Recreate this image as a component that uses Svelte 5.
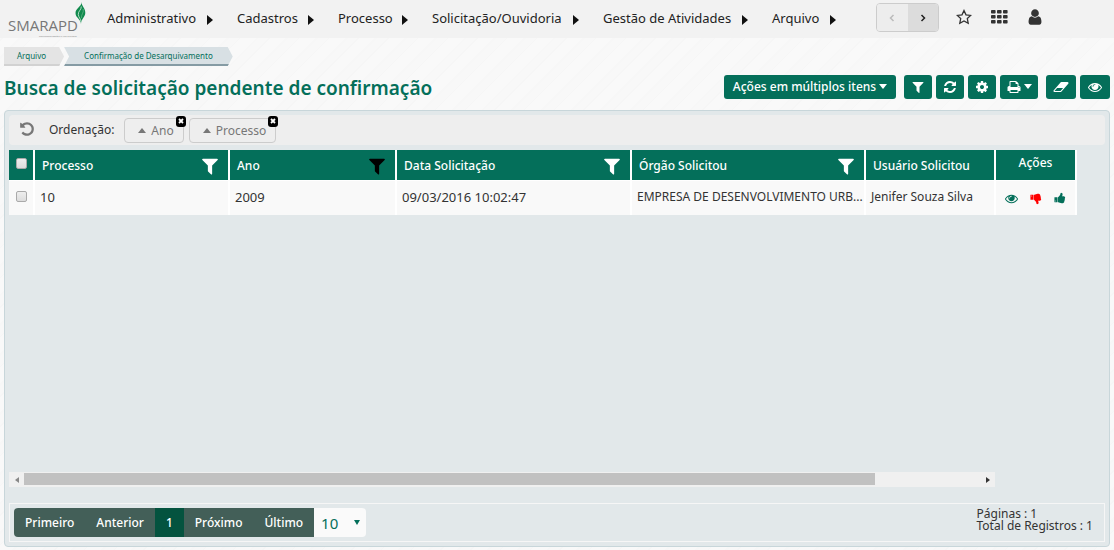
<script>
  const menu = ['Administrativo', 'Cadastros', 'Processo', 'Solicitação/Ouvidoria', 'Gestão de Atividades', 'Arquivo'];

  const icons = {
    filter: 'M1595 295q17 41-14 70l-493 493v742q0 42-39 59-13 5-25 5-27 0-45-19l-256-256q-19-19-19-45v-486l-493-493q-31-29-14-70 17-39 59-39h1280q42 0 59 39z',
    refresh: 'M1639 1056q0 5-1 7-64 268-268 434.5t-478 166.5q-146 0-282.5-55t-243.5-157l-129 129q-19 19-45 19t-45-19-19-45v-448q0-26 19-45t45-19h448q26 0 45 19t19 45-19 45l-137 137q71 66 161 102t187 36q134 0 250-65t186-179q11-17 53-117 8-23 30-23h192q13 0 22.5 9.5t9.5 22.5zm25-800v448q0 26-19 45t-45 19h-448q-26 0-45-19t-19-45 19-45l138-138q-148-137-349-137-134 0-250 65t-186 179q-11 17-53 117-8 23-30 23h-199q-13 0-22.5-9.5t-9.5-22.5v-7q65-268 270-434.5t480-166.5q146 0 284 55.5t245 156.5l130-129q19-19 45-19t45 19 19 45z',
    cog: 'M1152 896q0-106-75-181t-181-75-181 75-75 181 75 181 181 75 181-75 75-181zm512-109v222q0 12-8 23t-20 13l-185 28q-19 54-39 91 35 50 107 138 10 12 10 25t-9 23q-27 37-99 108t-94 71q-12 0-26-9l-138-108q-44 23-91 38-16 136-29 186-7 28-36 28h-222q-14 0-24.5-8.5t-11.5-21.5l-28-184q-49-16-90-37l-141 107q-10 9-25 9-14 0-25-11-126-114-165-168-7-10-7-23 0-12 8-23 15-21 51-66.5t54-70.5q-27-50-41-99l-183-27q-13-2-21-12.5t-8-23.5v-222q0-12 8-23t19-13l186-28q14-46 39-92-40-57-107-138-10-12-10-24 0-10 9-23 26-36 98.5-107.5t94.5-71.5q13 0 26 10l138 107q44-23 91-38 16-136 29-186 7-28 36-28h222q14 0 24.5 8.5t11.5 21.5l28 184q49 16 90 37l142-107q9-9 24-9 13 0 25 10 129 119 165 170 7 8 7 22 0 12-8 23-15 21-51 66.5t-54 70.5q26 50 41 98l183 28q13 2 21 12.5t8 23.5z',
    print: 'M448 1536h896v-256h-896v256zm0-640h896v-384h-160q-40 0-68-28t-28-68v-160h-640v640zm1152 64q0-26-19-45t-45-19-45 19-19 45 19 45 45 19 45-19 19-45zm128 0v416q0 13-9.5 22.5t-22.5 9.5h-224v160q0 40-28 68t-68 28h-960q-40 0-68-28t-28-68v-160h-224q-13 0-22.5-9.5t-9.5-22.5v-416q0-79 56.5-135.5t135.5-56.5h64v-544q0-40 28-68t68-28h672q40 0 88 20t76 48l152 152q28 28 48 76t20 88v256h64q79 0 135.5 56.5t56.5 135.5z',
    eraser: 'M960 1408l336-384h-768l-336 384h768zm1013-1077q15 34 9.5 71.5t-30.5 65.5l-896 1024q-38 44-96 44h-768q-38 0-69.5-20.5t-47.5-54.5q-15-34-9.5-71.5t30.5-65.5l896-1024q38-44 96-44h768q38 0 69.5 20.5t47.5 54.5z',
    eye: 'M1664 960q-152-236-381-353 61 104 61 225 0 185-131.5 316.5t-316.5 131.5-316.5-131.5-131.5-316.5q0-121 61-225-229 117-381 353 133 205 333.5 326.5t434.5 121.5 434.5-121.5 333.5-326.5zm-720-384q0-20-14-34t-34-14q-125 0-214.5 89.5t-89.5 214.5q0 20 14 34t34 14 34-14 14-34q0-86 61-147t147-61q20 0 34-14t14-34zm848 384q0 34-20 69-140 230-376.5 368.5t-499.5 138.5-499.5-139-376.5-368q-20-35-20-69t20-69q140-229 376.5-368t499.5-139 499.5 139 376.5 368q20 35 20 69z',
    user: 'M1536 1399q0 109-62.5 187t-150.5 78h-854q-88 0-150.5-78t-62.5-187q0-85 8.5-160.5t31.5-152 58.5-131 94-89 134.5-34.5q131 128 313 128t313-128q76 0 134.5 34.5t94 89 58.5 131 31.5 152 8.5 160.5zm-256-887q0 159-112.5 271.5t-271.5 112.5-271.5-112.5-112.5-271.5 112.5-271.5 271.5-112.5 271.5 112.5 112.5 271.5z',
    undo: 'M1664 896q0 156-61 298t-164 245-245 164-298 61q-172 0-327-72.5t-264-204.5q-7-10-6.5-22.5t8.5-20.5l137-138q10-9 25-9 16 2 23 12 73 95 179 147t225 52q104 0 198.5-40.5t163.5-109.5 109.5-163.5 40.5-198.5-40.5-198.5-109.5-163.5-163.5-109.5-198.5-40.5q-98 0-188 35.5t-160 101.5l137 138q31 30 14 69-17 40-59 40h-448q-26 0-45-19t-19-45v-448q0-42 40-59 39-17 69 14l130 129q107-101 244.5-156.5t284.5-55.5q156 0 298 61t245 164 164 245 61 298z',
    thumb: 'M320 1344q0-26-19-45t-45-19q-27 0-45.5 19t-18.5 45q0 27 18.5 45.5t45.5 18.5q26 0 45-18.5t19-45.5zm160-512v640q0 26-19 45t-45 19h-288q-26 0-45-19t-19-45v-640q0-26 19-45t45-19h288q26 0 45 19t19 45zm1184 0q0 86-55 149 15 44 15 76 3 76-43 137 17 56 0 117-15 57-54 94 9 112-49 181-64 76-197 78h-129q-66 0-144-15.5t-121.5-29-120.5-39.5q-123-43-158-44-26-1-45-19.5t-19-44.5v-641q0-25 18-43.5t43-20.5q24-2 76-59t101-121q68-87 101-120 18-18 31-48t17.5-48.5 13.5-60.5q7-39 12.5-61t19.5-52 34-50q19-19 45-19 46 0 82.5 10.5t60 26 40 40.5 24 45 12 50 5 45 .5 39q0 38-9.5 76t-19 60-27.5 56q-3 6-10 18t-11 22-8 24h277q78 0 135 57t57 135z'
  };

  const columns = [
    { title: 'Processo', filter: true, numeric: true },
    { title: 'Ano', filter: true, active: true, numeric: true },
    { title: 'Data Solicitação', filter: true, numeric: true },
    { title: 'Órgão Solicitou', filter: true },
    { title: 'Usuário Solicitou', filter: false }
  ];

  const rows = [
    ['10', '2009', '09/03/2016 10:02:47', 'EMPRESA DE DESENVOLVIMENTO URB...', 'Jenifer Souza Silva']
  ];

  let pageSize = $state('10');
</script>

{#snippet icon(name, size = 14)}
  <svg class="icon" width={name === 'eraser' ? size + 2 : size} height={size} viewBox={name === 'eraser' ? '0 0 2048 1792' : '0 0 1792 1792'} aria-hidden="true">
    <path d={icons[name]} />
  </svg>
{/snippet}

<div class="page">
  <header>
    <a class="logo" href="#inicio">
      <span class="brand">SMARAPD</span>
      <svg class="leaf" width="11" height="23" viewBox="0 0 11 23" aria-hidden="true">
        <path d="M6.500 0c0 4 4 6 3.800 11-.2 4-4.300 6-4.300 11C6 17 .5 16 .5 11 .5 6 6.500 5 6.500 0z" fill="#118a4d" />
        <path d="M6.300 4.500C6.500 8 3 9 3.300 12.500c.3 3 2.400 4 2.700 7" fill="none" stroke="#d7eee0" stroke-width=".8" />
        <path d="M8.200 7c.8 4-2 5-1.800 9" fill="none" stroke="#8fcba9" stroke-width=".5" />
      </svg>
      <span class="tagline">Simplificando Gestão e a Vida na Cidade</span>
    </a>
    <nav>
      {#each menu as item}
        <a href="#menu">{item}<span class="arrow"></span></a>
      {/each}
    </nav>
    <div class="steps">
      <button disabled aria-label="Voltar"><svg width="6" height="8" viewBox="0 0 6 8"><path d="M4.500 1 1.500 4l3 3" /></svg></button>
      <button aria-label="Avançar"><svg width="6" height="8" viewBox="0 0 6 8"><path d="m1.500 1 3 3-3 3" /></svg></button>
    </div>
    <div class="tools">
      <button class="plain" aria-label="Favoritos">
        <svg width="16" height="16" viewBox="0 0 16 16"><path d="m8 1.500 2 4.300 4.700.6-3.400 3.200.9 4.700L8 12l-4.200 2.300.9-4.700L1.300 6.400 6 5.800z" fill="none" stroke="#333" stroke-width="1.300" /></svg>
      </button>
      <button class="plain" aria-label="Aplicativos">
        <svg width="18" height="14" viewBox="0 0 18 14" fill="#333">
          {#each [0, 5, 10] as y}{#each [1, 7, 13] as x}<rect {x} {y} width="4.600" height="3.600" rx=".8" />{/each}{/each}
        </svg>
      </button>
      <button class="plain" aria-label="Usuário">{@render icon('user', 18)}</button>
    </div>
  </header>

  <ol class="crumbs">
    <li><a href="#arquivo">Arquivo</a></li>
    <li class="current"><a href="#confirmacao">Confirmação de Desarquivamento</a></li>
  </ol>

  <div class="heading">
    <h1>Busca de solicitação pendente de confirmação</h1>
    <div class="actions">
      <button class="green multi">Ações em múltiplos itens<span class="caret"></span></button>
      <button class="green" aria-label="Filtrar">{@render icon('filter')}</button>
      <button class="green" aria-label="Atualizar">{@render icon('refresh')}</button>
      <button class="green" aria-label="Configurar">{@render icon('cog')}</button>
      <button class="green print" aria-label="Imprimir">{@render icon('print')}<span class="caret"></span></button>
      <button class="green apart" aria-label="Limpar">{@render icon('eraser')}</button>
      <button class="green wide" aria-label="Visualizar">{@render icon('eye')}</button>
    </div>
  </div>

  <main>
    <div class="sorting">
      <button class="plain undo" aria-label="Desfazer">{@render icon('undo', 16)}</button>
      <span>Ordenação:</span>
      {#each ['Ano', 'Processo'] as name}
        <div class="chip">
          <button class="sort"><span class="up"></span>{name}</button>
          <button class="remove" aria-label="Remover {name}"><svg width="6" height="6" viewBox="0 0 6 6"><path d="m1 1 4 4M5 1 1 5" stroke="#fff" stroke-width="1.800" /></svg></button>
        </div>
      {/each}
    </div>

    <div class="grid">
      <table>
        <colgroup>
          <col class="c-check" /><col class="c-proc" /><col class="c-ano" /><col class="c-data" /><col /><col class="c-user" /><col class="c-acts" />
        </colgroup>
        <thead>
          <tr>
            <th class="check"><input type="checkbox" aria-label="Selecionar todos" /></th>
            {#each columns as col}
              <th>
                <div class="head">
                  {col.title}
                  {#if col.filter}
                    <button class="plain funnel" class:active={col.active} aria-label="Filtrar {col.title}">{@render icon('filter', 20)}</button>
                  {/if}
                </div>
              </th>
            {/each}
            <th class="acts">Ações</th>
          </tr>
        </thead>
        <tbody>
          {#each rows as row}
            <tr>
              <td class="check"><input type="checkbox" aria-label="Selecionar processo {row[0]}" /></td>
              {#each row as cell, i}<td class:numeric={columns[i].numeric}>{cell}</td>{/each}
              <td class="acts">
                <div class="row-acts">
                  <button class="plain" aria-label="Visualizar">{@render icon('eye', 13)}</button>
                  <button class="plain reject" aria-label="Rejeitar">{@render icon('thumb', 12)}</button>
                  <button class="plain" aria-label="Confirmar">{@render icon('thumb', 12)}</button>
                </div>
              </td>
            </tr>
          {/each}
        </tbody>
      </table>
    </div>

    <div class="scroll">
      <button class="plain" aria-label="Rolar à esquerda"><span class="tri left"></span></button>
      <div class="track"><div class="thumb"></div></div>
      <button class="plain" aria-label="Rolar à direita"><span class="tri right"></span></button>
    </div>

    <footer>
      <div class="pager">
        <button>Primeiro</button>
        <button>Anterior</button>
        <button class="on">1</button>
        <button>Próximo</button>
        <button>Último</button>
        <div class="size">
          <select bind:value={pageSize} aria-label="Registros por página">
            <option>10</option><option>20</option><option>50</option>
          </select>
        </div>
      </div>
      <div class="totals">
        <div>Páginas : 1</div>
        <div>Total de Registros : 1</div>
      </div>
    </footer>
  </main>
</div>

<style>
  :global(body) { margin: 0; }
  * { box-sizing: border-box; }
  .page {
    min-height: 100vh;
    display: flex;
    flex-direction: column;
    font-family: 'Noto Sans', 'Open Sans', sans-serif;
    font-size: 12px;
    color: #333;
    background: repeating-linear-gradient(135deg, #f8f8f8 0 7px, #f6f6f6 7px 8px, #f9f9f9 8px 19px, #f7f7f7 19px 21px);
  }
  button, select { font: inherit; color: inherit; cursor: pointer; }
  a { color: inherit; text-decoration: none; }
  .icon { display: block; fill: currentColor; }
  .plain { display: flex; padding: 0; border: 0; background: none; }

  header { display: flex; height: 38px; background: #f2f2f2; }
  .logo { position: relative; width: 107px; flex: none; padding: 17px 0 0 8px; }
  .brand { display: block; font: 15px/16px 'Open Sans', sans-serif; color: #777; }
  .leaf { position: absolute; left: 75px; top: 2px; }
  .tagline { position: absolute; left: 39px; top: 35px; font-size: 2px; line-height: 3px; white-space: nowrap; color: #888; }
  nav { display: grid; grid-template-columns: 130px 101px 94px 171px 169px 64px; flex: none; margin-right: 40px; line-height: 36px; height: 36px; font-size: 13px; color: #222; }
  nav a { display: flex; align-items: center; justify-content: space-between; padding-right: 24px; white-space: nowrap; }
  nav a:last-child { padding-right: 0; }
  .arrow { border: 5px solid transparent; border-left: 6px solid #111; border-right: 0; margin-top: 3px; }
  .steps { display: flex; width: 63px; height: 29px; margin-top: 3px; border: 1px solid #ccc; border-radius: 4px; overflow: hidden; }
  .steps button { flex: 1; padding: 0; border: 0; background: #dcdcdc; }
  .steps button:disabled { background: #ededed; opacity: 1; }
  .steps path { fill: none; stroke: #222; stroke-width: 1.500; }
  .steps button:disabled path { stroke: #bbb; }
  .tools { display: flex; align-items: center; gap: 18px; height: 34px; margin-left: 17px; color: #333; }

  .crumbs { display: flex; list-style: none; margin: 9px 0 0 4px; padding: 0; font-size: 8px; line-height: 17px; color: #046f5a; }
  .crumbs li { height: 19px; padding: 0 18px 0 13px; background: #e4e4e4; border-bottom: 2px solid #d2d2d2; clip-path: polygon(0 0, calc(100% - 5px) 0, 100% 50%, calc(100% - 5px) 100%, 0 100%); }
  .crumbs .current { padding: 0 20px; background: #d8e0e4; border-color: #859ba4; clip-path: polygon(0 0, calc(100% - 5px) 0, 100% 50%, calc(100% - 5px) 100%, 0 100%, 5px 50%); }

  .heading { display: flex; justify-content: space-between; align-items: center; height: 33px; margin: 4px 4px 7px; }
  h1 { margin: 0; padding-top: 2px; font-size: 19px; line-height: 24px; font-weight: 600; color: #046f5a; }
  .actions { display: flex; gap: 4px; }
  .green { display: flex; align-items: center; justify-content: center; width: 28px; height: 24px; padding: 0; border: 0; border-radius: 3px; background: #046f5a; color: #fff; font-weight: 500; }
  .multi { width: 172px; margin-right: 4px; }
  .print { width: 38px; }
  .apart { margin-left: 4px; width: 30px; }
  .wide { width: 30px; }
  .caret { margin-left: 3px; border: 4px solid transparent; border-top: 5px solid currentColor; border-bottom: 0; }

  main { flex: 1; display: flex; flex-direction: column; margin: 0 4px 3px 4px; padding: 4px; border: 1px solid #c8d6da; border-radius: 4px; background: #e2e8ea; }
  .sorting { display: flex; align-items: center; height: 30px; padding: 0 10px 2px; border-radius: 4px; background: #eee; }
  .undo { color: #777; margin-right: 14px; }
  .sorting > span { margin-right: 10px; }
  .chip { position: relative; margin-right: 5px; padding-top: 2px; }
  .sort { display: flex; align-items: center; gap: 5px; height: 25px; padding: 0 9px 0 13px; border: 1px solid #ccc; border-radius: 4px; background: #eee; color: #777; }
  .up { border: 4px solid transparent; border-bottom: 5px solid #777; border-top: 0; }
  .remove { position: absolute; right: -2px; top: 0; display: flex; align-items: center; justify-content: center; width: 10px; height: 11px; padding: 0; border: 0; border-radius: 3px; background: #000; }

  .grid { flex: 1; margin: 5px 28px 0 0; }
  table { width: 100%; table-layout: fixed; border-collapse: separate; border-spacing: 0; }
  .c-check { width: 26px; }
  .c-proc { width: 195px; }
  .c-ano { width: 167px; }
  .c-data { width: 235px; }
  .c-user { width: 130px; }
  .c-acts { width: 81px; }
  th { height: 31px; padding: 1px 8px 0 7px; border-right: 2px solid #fff; border-bottom: 1px solid #fff; background: #046f5a; color: #fff; text-align: left; font-weight: 500; }
  td { height: 34px; padding: 0 0 3px 5px; border-right: 2px solid #fff; background: #f9f9f9; overflow: hidden; text-overflow: ellipsis; white-space: nowrap; }
  .numeric { font-size: 13px; }
  .head { display: flex; align-items: center; justify-content: space-between; height: 29px; white-space: nowrap; }
  .funnel { color: #fff; }
  .funnel.active { color: #000; }
  .check { padding: 0 0 4px; text-align: center; }
  input { appearance: none; display: block; width: 11px; height: 11px; margin: 0 auto; border: 1px solid #aaa; border-radius: 2px; background: linear-gradient(#eee, #ddd); }
  th.acts { padding: 0 0 6px; text-align: center; }
  td.acts { padding: 0; }
  .row-acts { display: flex; justify-content: center; gap: 12px; color: #046f5a; }
  .reject { color: #f00; transform: scaleY(-1); }

  .scroll { display: flex; height: 15px; margin: 0 110px 16px 0; background: #f0f0f0; }
  .scroll button { width: 15px; align-items: center; justify-content: center; }
  .track { flex: 1; padding: 1px 0; }
  .thumb { width: 89%; height: 12px; background: #c1c1c1; }
  .tri { border: 3px solid transparent; }
  .left { border-right: 4px solid #888; border-left: 0; }
  .right { border-left: 4px solid #333; border-right: 0; }

  footer { display: flex; justify-content: space-between; padding: 4px 11px 4px 4px; border: 1px solid #f6f6f6; }
  .pager { display: flex; height: 29px; color: #fff; font-weight: 500; }
  .pager button { padding: 0 11px; border: 0; background: #435f58; }
  .pager button:first-child { border-radius: 4px 0 0 4px; }
  .pager .on { background: #04533f; }
  .size { position: relative; }
  .size::after { content: ''; position: absolute; right: 6px; top: 12px; border: 3px solid transparent; border-top: 5px solid #046f5a; border-bottom: 0; pointer-events: none; }
  select { appearance: none; width: 52px; height: 100%; padding: 0 0 0 7px; border: 0; border-radius: 0 4px 4px 0; color: #046f5a; font-size: 15px; font-weight: 400; background: #fafafa; }
  .totals { line-height: 12px; }
</style>
